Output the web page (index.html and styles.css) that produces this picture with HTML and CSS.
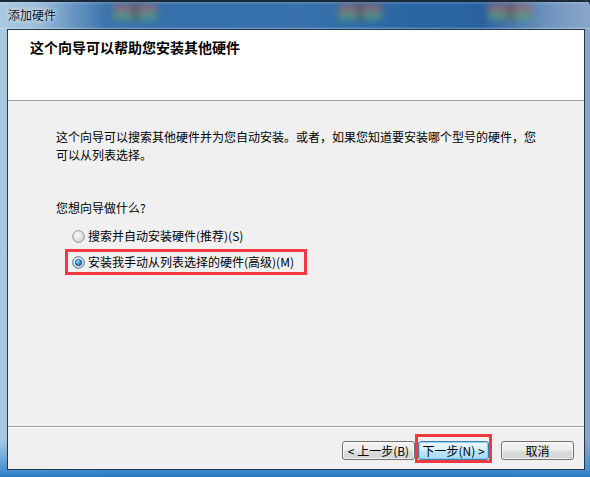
FILE: index.html
```html
<!DOCTYPE html>
<html lang="zh-CN">
<head>
<meta charset="utf-8">
<title>添加硬件</title>
<link rel="stylesheet" href="styles.css">
</head>
<body>
<div class="window">
  <div class="titlebar">
    <span class="blob blob1"></span>
    <span class="blob blob2"></span>
    <span class="blob blob3"></span>
    <span class="title">添加硬件</span>
  </div>
  <div class="client">
    <div class="header">
      <div class="header-title">这个向导可以帮助您安装其他硬件</div>
    </div>
    <div class="body">
      <p class="intro">这个向导可以搜索其他硬件并为您自动安装。或者，如果您知道要安装哪个型号的硬件，您可以从列表选择。</p>
      <p class="question">您想向导做什么?</p>
      <div class="option">
        <svg class="radio" width="13" height="13" viewBox="0 0 13 13">
          <defs>
            <radialGradient id="rg1" cx="0.35" cy="0.3" r="0.8">
              <stop offset="0" stop-color="#ffffff"/>
              <stop offset="1" stop-color="#cfcfcf"/>
            </radialGradient>
          </defs>
          <circle cx="6.5" cy="6.5" r="5.8" fill="url(#rg1)" stroke="#8e8f8f" stroke-width="1"/>
          <circle cx="6.5" cy="6.5" r="4.2" fill="none" stroke="#e2e2e2" stroke-width="0.8"/>
        </svg>
        <span>搜索并自动安装硬件(推荐)(S)</span>
      </div>
      <div class="option selected">
        <svg class="radio" width="13" height="13" viewBox="0 0 13 13">
          <defs>
            <radialGradient id="rg2" cx="0.35" cy="0.3" r="0.8">
              <stop offset="0" stop-color="#ffffff"/>
              <stop offset="1" stop-color="#d4d4d4"/>
            </radialGradient>
            <radialGradient id="dot" cx="0.4" cy="0.35" r="0.7">
              <stop offset="0" stop-color="#a6e2fb"/>
              <stop offset="0.5" stop-color="#3c94d0"/>
              <stop offset="1" stop-color="#144f8a"/>
            </radialGradient>
          </defs>
          <circle cx="6.5" cy="6.5" r="5.8" fill="url(#rg2)" stroke="#3d6f9c" stroke-width="1"/>
          <circle cx="6.5" cy="6.5" r="3.3" fill="url(#dot)" stroke="#1f4a78" stroke-width="0.6"/>
        </svg>
        <span>安装我手动从列表选择的硬件(高级)(M)</span>
      </div>
    </div>
    <div class="footer">
      <button class="btn">&lt; 上一步(B)</button>
      <div class="focus-mark"><button class="btn default">下一步(N) &gt;</button></div>
      <button class="btn cancel">取消</button>
    </div>
  </div>
</div>
</body>
</html>
```

FILE: styles.css
```css
html, body {
  margin: 0;
  padding: 0;
  background: #1b2633;
}

body {
  font-family: "Noto Sans CJK SC", "Microsoft YaHei", sans-serif;
  font-size: 12px;
  color: #000;
}

.window {
  width: 590px;
  height: 477px;
  display: flex;
  flex-direction: column;
  overflow: hidden;
  border-top-right-radius: 6px;
  background:
    linear-gradient(to bottom, rgba(0,0,0,0) 0, rgba(0,0,0,0) 440px, rgba(60,140,210,0.9) 470px, #2c79c0 477px),
    linear-gradient(to right, #a9c8e2 0, #9bbcd9 6%, #3b75ad 18%, #2d6aa6 45%, #2a68a5 62%, #2a62a0 82%, #6f93bd 93%, #8aa7c9 100%);
}

.titlebar {
  position: relative;
  height: 29px;
  flex: none;
  box-sizing: border-box;
  border-top: 2px solid #1a2838;
  padding-left: 8px;
  display: flex;
  align-items: center;
  overflow: hidden;
  background:
    linear-gradient(to bottom, rgba(255,255,255,0.18) 0, rgba(255,255,255,0) 3px, rgba(255,255,255,0) 25px, rgba(255,255,255,0.35) 27px),
    linear-gradient(100deg, rgba(255,255,255,0) 0, rgba(255,255,255,0) 30%, rgba(255,255,255,0.06) 50%, rgba(255,255,255,0) 70%);
}

.title {
  position: relative;
  font-size: 12px;
  line-height: 14px;
  margin-top: -2px;
  color: #0c1620;
  text-shadow: 0 0 4px rgba(255,255,255,0.9), 0 0 8px rgba(255,255,255,0.6);
}

.blob {
  position: absolute;
  top: 2px;
  width: 44px;
  height: 16px;
  filter: blur(3.5px);
  background:
    linear-gradient(to right, rgba(0,0,0,0) 0, rgba(0,0,0,0) 42%, rgba(90,50,40,0.7) 46%, rgba(90,50,40,0.7) 54%, rgba(0,0,0,0) 58%),
    linear-gradient(to bottom, #a8666c 0, #a8666c 40%, #5e9f72 58%, #5e9f72 100%);
  opacity: 0.7;
}
.blob1 { left: 113px; }
.blob2 { left: 338px; }
.blob3 { left: 488px; }

.client {
  flex: 1;
  margin: 0 5px 7px 7px;
  border: 1px solid #23384e;
  background: #f0f0f0;
  display: flex;
  flex-direction: column;
  min-height: 0;
}

.header {
  height: 70px;
  flex: none;
  background: #fff;
  border-bottom: 1px solid #a0a0a0;
  box-sizing: content-box;
}

.header-title {
  padding: 9px 0 0 22px;
  font-size: 14px;
  line-height: 16px;
  font-weight: bold;
}

.body {
  flex: 1;
  padding: 27px 43px 0 48px;
  border-bottom: 1px solid #a0a0a0;
  box-shadow: 0 1px 0 #ffffff;
}

.intro {
  margin: 0;
  line-height: 18px;
}

.question {
  margin: 35px 0 6px 0;
  line-height: 18px;
}

.option {
  display: flex;
  align-items: center;
  width: fit-content;
  height: 20px;
  margin-left: 9px;
  padding: 0 10px 0 4px;
  border: 3px solid transparent;
  line-height: 20px;
}

.option.selected {
  border-color: #f03a3e;
}

.radio {
  flex: none;
  margin-right: 3px;
  display: block;
}

.footer {
  height: 42px;
  flex: none;
  display: flex;
  align-items: flex-start;
  justify-content: flex-end;
  padding-right: 10px;
}

.btn {
  margin-top: 14px;
  width: 73px;
  height: 19px;
  padding: 0;
  box-sizing: border-box;
  font-family: "Noto Sans CJK SC", "Microsoft YaHei", sans-serif;
  font-size: 12px;
  line-height: 15px;
  color: #000;
  border: 1px solid #707070;
  border-radius: 3px;
  background: linear-gradient(to bottom, #f4f4f4 0, #ececec 48%, #dedede 52%, #d2d2d2 100%);
  box-shadow: inset 0 0 0 1px rgba(255,255,255,0.7);
}

.focus-mark {
  margin-top: 7px;
  padding: 4px 0 0 0;
  width: 71px;
  border: 3px solid #f03a3e;
  display: flex;
  justify-content: center;
}

.btn.default {
  margin-top: 0;
  width: 71px;
  border-color: #3c7fb1;
  background: linear-gradient(to bottom, #eaf6fd 0, #d9f0fc 48%, #bee6fd 52%, #a7d9f5 100%);
  box-shadow: inset 0 0 0 1px rgba(120,200,240,0.7);
}

.btn.cancel {
  margin-left: 9px;
}
```
